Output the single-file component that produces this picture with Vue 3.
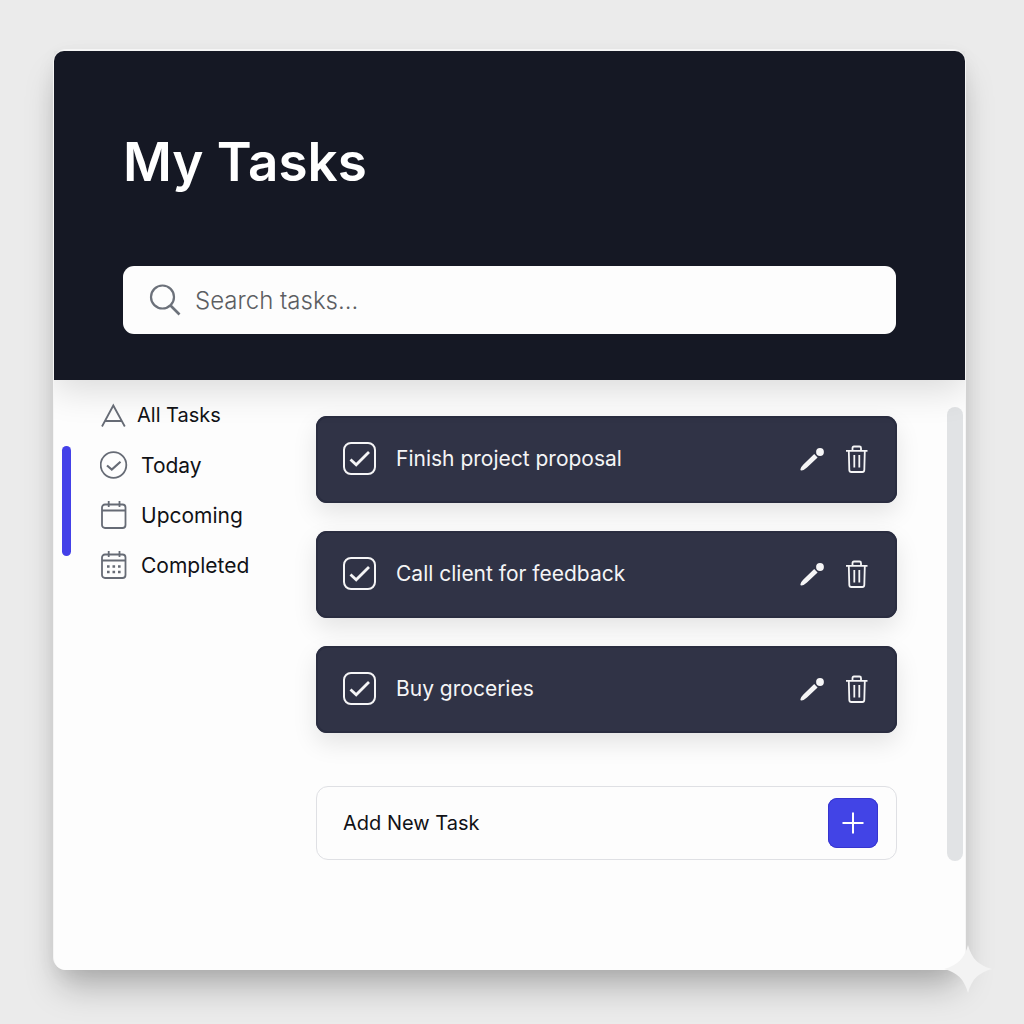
<script setup>
import { ref } from 'vue'

const query = ref('')
const draft = ref('')

const filters = [
  { id: 'all', label: 'All Tasks' },
  { id: 'today', label: 'Today' },
  { id: 'upcoming', label: 'Upcoming' },
  { id: 'completed', label: 'Completed' },
]

const tasks = ref([
  { id: 1, title: 'Finish project proposal', done: true },
  { id: 2, title: 'Call client for feedback', done: true },
  { id: 3, title: 'Buy groceries', done: true },
])

function removeTask(id) {
  tasks.value = tasks.value.filter((task) => task.id !== id)
}

function addTask() {
  const title = draft.value.trim()
  if (!title) return
  tasks.value.push({ id: Date.now(), title, done: false })
  draft.value = ''
}
</script>

<template>
  <div class="page">
    <div class="card">
      <header class="header">
        <h1 class="title">My Tasks</h1>
        <label class="search">
          <svg class="search-icon" viewBox="0 0 32 32" aria-hidden="true">
            <circle cx="13.500" cy="13" r="11.500" />
            <path d="M21.500 21.500 30.500 30.500" stroke-width="2.600" />
          </svg>
          <input v-model="query" class="search-input" type="text" placeholder="Search tasks..." aria-label="Search tasks" />
        </label>
      </header>

      <div class="body">
        <nav class="sidebar" aria-label="Task filters">
          <span class="indicator"></span>
          <a v-for="f in filters" :key="f.id" href="#" class="filter" :class="f.id">
            <svg class="filter-icon" viewBox="0 0 28 28" aria-hidden="true">
              <path v-if="f.id === 'all'" d="M2 25.500 13.300 4.500 24.800 25.500M5.500 20H21.500" />
              <template v-else-if="f.id === 'today'">
                <circle cx="13.500" cy="14" r="12.800" />
                <path d="M7 14.500 11.800 18.500 20.500 10.800" stroke-width="2.200" />
              </template>
              <template v-else>
                <rect x="2" y="3.500" width="23.500" height="23.500" rx="3" />
                <path d="M2 9.500H25.500M8.700 0V6M19.500 0V6" />
                <path v-if="f.id === 'completed'" class="dots" d="M7 15.500h2.600M12.500 15.500h2.600M18 15.500h2.600M7 21h2.600M12.500 21h2.600M18 21h2.600" />
              </template>
            </svg>
            <span>{{ f.label }}</span>
          </a>
        </nav>

        <main class="main">
          <ul class="tasks">
            <li v-for="task in tasks" :key="task.id" class="task">
              <label class="task-label">
                <span class="check">
                  <input v-model="task.done" type="checkbox" class="check-input" />
                  <svg v-show="task.done" class="check-mark" viewBox="0 0 33 33" aria-hidden="true">
                    <path d="M7.500 17.500 13.200 22.800 26 10" />
                  </svg>
                </span>
                <span>{{ task.title }}</span>
              </label>
              <button type="button" class="icon-button" :aria-label="`Edit ${task.title}`">
                <svg viewBox="0 0 24 28" aria-hidden="true">
                  <path class="solid" d="M13.200 9 16.600 12.400 6 22.500Q3 25.200.6 25.600Q-.8 25.600-.6 24.300Q-.2 22 2.400 19.500Z" />
                  <circle class="solid" cx="19" cy="7" r="3.900" />
                </svg>
              </button>
              <button type="button" class="icon-button" :aria-label="`Delete ${task.title}`" @click="removeTask(task.id)">
                <svg viewBox="0 0 24 28" aria-hidden="true">
                  <path d="M1 5.800H22.500M7.500 5.500V3Q7.500 1.500 9 1.500H14.500Q16 1.500 16 3V5.500M3.800 6 4.300 25Q4.400 27 6.300 27H17.300Q19.200 27 19.300 25L19.800 6M9.300 10V22.500M14.300 10V22.500" />
                </svg>
              </button>
            </li>
          </ul>

          <form class="add" @submit.prevent="addTask">
            <input v-model="draft" class="add-input" type="text" placeholder="Add New Task" aria-label="Add new task" />
            <button type="submit" class="add-button" aria-label="Add task">
              <svg viewBox="0 0 22 22" aria-hidden="true"><path d="M11 .5V21.500M.5 11H21.500" /></svg>
            </button>
          </form>
        </main>

        <div class="scrollbar" aria-hidden="true"></div>
      </div>

      <svg class="sparkle" viewBox="0 0 48 48" aria-hidden="true">
        <path d="M24 0C28 14 34 20 48 24C34 28 28 34 24 48C20 34 14 28 0 24C14 20 20 14 24 0Z" />
      </svg>
    </div>
  </div>
</template>

<style>
body {
  margin: 0;
  background: #ebebeb;
}
</style>

<style scoped>
.page {
  box-sizing: border-box;
  min-height: 100vh;
  display: flex;
  padding: 51px 59px 54px 54px;
  font-family: Inter, "Liberation Sans", sans-serif;
  color: #111216;
}

.card {
  position: relative;
  flex: 1;
  display: flex;
  flex-direction: column;
  border-radius: 12px;
  background: #fdfdfd;
  box-shadow: 0 -1px 0 1px #f5f5f5, 0 22px 34px -6px rgba(0, 0, 0, 0.26), 0 4px 20px rgba(0, 0, 0, 0.06);
}

.header {
  padding: 75px 69px 46px;
  border-radius: 10px 10px 0 0;
  background: #151824;
  box-shadow: 0 10px 36px rgba(0, 0, 0, 0.14);
  clip-path: inset(0 0 -70px 0);
}

.title {
  margin: 0 0 68px;
  font-size: 53px;
  line-height: 72px;
  font-weight: 600;
  color: #fff;
}

.search {
  display: flex;
  align-items: center;
  gap: 14px;
  height: 68px;
  padding: 0 26px;
  border-radius: 11px;
  background: #fdfdfd;
}

.search-icon {
  width: 32px;
  height: 32px;
  fill: none;
  stroke: #6c717a;
  stroke-width: 2.2;
}

input,
button {
  min-width: 0;
  margin: 0;
  padding: 0;
  border: 0;
  outline: 0;
  background: none;
  font: inherit;
  color: inherit;
}

.search-input {
  flex: 1;
  font-size: 24px;
  font-weight: 300;
}

.search-input::placeholder {
  color: #5c5e62;
  opacity: 1;
}

.body {
  flex: 1;
  display: flex;
  align-items: flex-start;
}

.sidebar {
  position: relative;
  box-sizing: border-box;
  flex: 0 0 262px;
  padding: 10px 0 0 46px;
}

.indicator {
  position: absolute;
  left: 8px;
  top: 66px;
  width: 9px;
  height: 110px;
  border-radius: 5px;
  background: #4340e8;
}

.filter {
  display: flex;
  align-items: center;
  gap: 13px;
  height: 50px;
  font-size: 21px;
  color: inherit;
  text-decoration: none;
}

.filter.all {
  gap: 9px;
  font-size: 20px;
}

.filter-icon {
  width: 28px;
  height: 28px;
  fill: none;
  stroke: #666b75;
  stroke-width: 1.8;
}

.filter-icon .dots {
  stroke-width: 2.6;
}

.main {
  flex: 1;
  min-width: 0;
  padding-top: 36px;
}

.tasks {
  display: flex;
  flex-direction: column;
  gap: 28px;
  margin: 0 0 53px;
  padding: 0;
  list-style: none;
}

.task {
  box-sizing: border-box;
  display: flex;
  align-items: center;
  gap: 20px;
  height: 87px;
  padding: 0 28px 2px 27px;
  border-radius: 11px;
  background: #303346;
  box-shadow: inset 0 0 0 2px #2a2d40, 0 10px 24px rgba(0, 0, 0, 0.1);
  color: #f5f5f6;
}

.task-label {
  flex: 1;
  display: flex;
  align-items: center;
  gap: 20px;
  font-size: 21px;
}

.check {
  display: grid;
  width: 33px;
  height: 33px;
}

.check-input,
.check-mark {
  grid-area: 1 / 1;
  width: 33px;
  height: 33px;
}

.check-input {
  appearance: none;
  box-sizing: border-box;
  border: 2px solid #f5f5f6;
  border-radius: 8px;
}

.check-mark {
  fill: none;
  stroke: #f5f5f6;
  stroke-width: 2.8;
  pointer-events: none;
}

.icon-button {
  display: flex;
  cursor: pointer;
}

.icon-button svg {
  width: 24px;
  height: 28px;
  overflow: visible;
  fill: none;
  stroke: #f5f5f6;
  stroke-width: 1.8;
}

.icon-button .solid {
  fill: #f5f5f6;
  stroke: none;
}

.add {
  box-sizing: border-box;
  display: flex;
  align-items: center;
  height: 74px;
  padding: 0 18px 0 26px;
  border: 1px solid #dfe0e4;
  border-radius: 12px;
}

.add-input {
  flex: 1;
  font-size: 20px;
}

.add-input::placeholder {
  color: #111216;
  opacity: 1;
}

.add-button {
  display: grid;
  place-items: center;
  width: 50px;
  height: 50px;
  border-radius: 9px;
  background: #4244e6;
  box-shadow: inset 0 0 0 1px #3634cf;
}

.add-button svg {
  width: 22px;
  height: 22px;
  stroke: #fff;
  stroke-width: 2;
}

.scrollbar {
  flex: 0 0 16px;
  height: 454px;
  margin: 27px 2px 0 50px;
  border-radius: 8px;
  background: #e1e3e5;
}

.sparkle {
  position: absolute;
  right: -27px;
  bottom: -23px;
  width: 48px;
  height: 48px;
  fill: #f3f3f3;
}
</style>
